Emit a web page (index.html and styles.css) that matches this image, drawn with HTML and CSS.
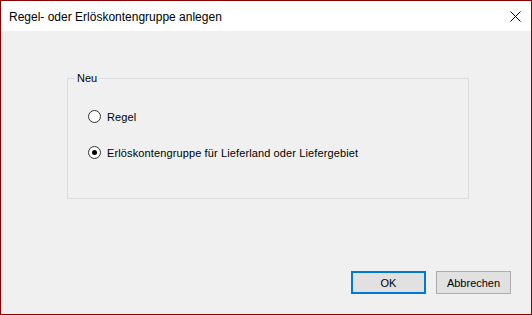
FILE: index.html
```html
<!DOCTYPE html>
<html lang="de">
<head>
<meta charset="utf-8">
<title>Regel- oder Erlöskontengruppe anlegen</title>
<link rel="stylesheet" href="styles.css">
</head>
<body>
<div class="window">
  <div class="titlebar">
    <span class="title">Regel- oder Erlöskontengruppe anlegen</span>
    <svg class="close" width="11" height="11" viewBox="0 0 11 11"><path d="M0.5 0.5 L10.5 10.5 M10.5 0.5 L0.5 10.5" stroke="#000" stroke-width="1" fill="none"/></svg>
  </div>
  <div class="content">
    <fieldset class="group">
      <legend class="legend">Neu</legend>
      <div class="options">
        <label class="option"><span class="radio"></span><span class="label">Regel</span></label>
        <label class="option"><span class="radio checked"></span><span class="label">Erlöskontengruppe für Lieferland oder Liefergebiet</span></label>
      </div>
    </fieldset>
    <div class="buttons">
      <button class="btn default">OK</button>
      <button class="btn">Abbrechen</button>
    </div>
  </div>
</div>
</body>
</html>
```
FILE: styles.css
```css
html, body {
  margin: 0;
  padding: 0;
  background: #f0f0f0;
}
.window {
  width: 532px;
  height: 315px;
  box-sizing: border-box;
  border: 1px solid #8b0000;
  background: #f0f0f0;
  display: flex;
  flex-direction: column;
  font-family: "Liberation Sans", Arial, sans-serif;
  font-size: 11px;
  color: #000;
}
.titlebar {
  height: 30px;
  background: #ffffff;
  display: flex;
  align-items: center;
  justify-content: space-between;
  padding: 0 10px 0 8px;
  flex: none;
}
.title {
  font-size: 12px;
  margin-top: 1px;
}
.close {
  display: block;
  margin-top: 1px;
}
.content {
  flex: 1;
  display: flex;
  flex-direction: column;
  justify-content: space-between;
  padding: 0 20px 20px 0;
}
.group {
  margin: 41px 0 0 66px;
  width: 402px;
  height: 127px;
  box-sizing: border-box;
  border: 1px solid #dcdcdc;
  padding: 0;
  min-width: 0;
}
.legend {
  margin-left: 7px;
  padding: 0 2px;
  line-height: 13px;
}
.options {
  display: flex;
  flex-direction: column;
  gap: 23px;
  padding: 25px 0 0 20px;
}
.option {
  display: flex;
  align-items: center;
  gap: 6px;
  height: 13px;
}
.label {
  letter-spacing: 0.12px;
}
.radio {
  width: 13px;
  height: 13px;
  box-sizing: border-box;
  border: 1px solid #333333;
  border-radius: 50%;
  background: #ffffff;
  display: flex;
  align-items: center;
  justify-content: center;
}
.radio.checked::after {
  content: "";
  width: 5px;
  height: 5px;
  border-radius: 50%;
  background: #000;
}
.buttons {
  display: flex;
  justify-content: flex-end;
  gap: 10px;
}
.btn {
  width: 75px;
  height: 23px;
  box-sizing: border-box;
  border: 1px solid #adadad;
  background: #e1e1e1;
  font-family: "Liberation Sans", Arial, sans-serif;
  font-size: 11px;
  color: #000;
  padding: 0;
  margin: 0;
}
.btn.default {
  border: 2px solid #0078d7;
}
```
